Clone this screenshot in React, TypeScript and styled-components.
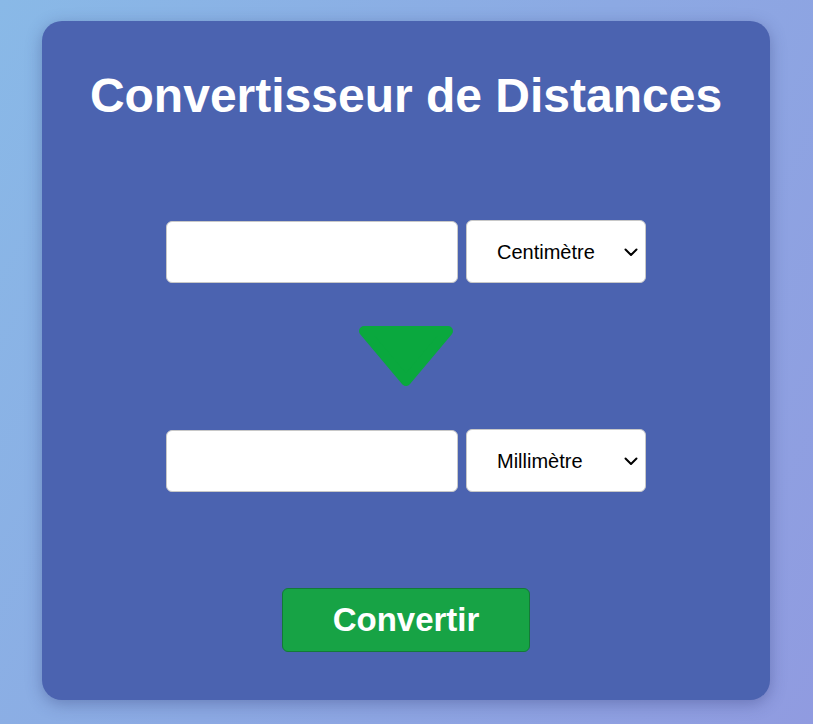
import React from "react";
import styled, { createGlobalStyle } from "styled-components";

const Global = createGlobalStyle`
  html, body { margin: 0; padding: 0; }
  body {
    min-height: 724px;
    background: linear-gradient(120deg, #89b9e7 0%, #8ca9e3 50%, #909be0 100%);
    font-family: "Liberation Sans", Arial, sans-serif;
  }
`;

const Page = styled.div`
  display: flex;
  justify-content: center;
  padding-top: 21px;
  padding-right: 1px;
  height: 724px;
  box-sizing: border-box;
`;

const Card = styled.div`
  width: 728px;
  height: 679px;
  box-sizing: border-box;
  background: #4b63b0;
  border-radius: 20px;
  box-shadow: 0 4px 16px rgba(40, 50, 110, 0.35);
  display: flex;
  flex-direction: column;
  align-items: center;
`;

const Title = styled.h1`
  margin: 47px 0 0;
  font-size: 48px;
  font-weight: bold;
  color: #ffffff;
  line-height: 55px;
`;

const Row = styled.div<{ $mt: number }>`
  display: flex;
  gap: 8px;
  margin-top: ${(p) => p.$mt}px;
`;

const Field = styled.input`
  width: 292px;
  height: 62px;
  box-sizing: border-box;
  border: 1px solid #c8c8c8;
  border-radius: 6px;
  background: #fff;
  font-family: "Liberation Sans", Arial, sans-serif;
  font-size: 20px;
  padding: 0 10px;
  margin-top: 1px;
`;

const SelectWrap = styled.div`
  position: relative;
  width: 180px;
  height: 63px;
`;

const Unit = styled.select`
  appearance: none;
  -webkit-appearance: none;
  width: 100%;
  height: 100%;
  box-sizing: border-box;
  border: 1px solid #c8c8c8;
  border-radius: 6px;
  background: #fff;
  color: #000;
  font-family: "Liberation Sans", Arial, sans-serif;
  font-size: 20px;
  padding: 0 8px 0 30px;
  outline: none;
`;

const Chevron = styled.svg`
  position: absolute;
  right: 7px;
  top: 50%;
  transform: translateY(-50%);
  pointer-events: none;
`;

const Arrow = styled.svg`
  display: block;
  margin-top: 42px;
`;

const ConvertButton = styled.button`
  margin-top: 96px;
  width: 248px;
  height: 64px;
  box-sizing: border-box;
  background: #17a345;
  border: 1px solid #137a37;
  border-radius: 6px;
  color: #fff;
  font-family: "Liberation Sans", Arial, sans-serif;
  font-size: 33px;
  font-weight: bold;
  cursor: pointer;
`;

const units = [
  { v: "mm", l: "Millimètre" },
  { v: "cm", l: "Centimètre" },
  { v: "m", l: "Mètre" },
  { v: "km", l: "Kilomètre" },
];

function UnitSelect({ value }: { value: string }) {
  return (
    <SelectWrap>
      <Unit defaultValue={value}>
        {units.map((u) => (
          <option key={u.v} value={u.v}>
            {u.l}
          </option>
        ))}
      </Unit>
      <Chevron width="16" height="16" viewBox="0 0 16 16">
        <path
          d="M2.5 5.5 L8 11 L13.5 5.5"
          fill="none"
          stroke="#000"
          strokeWidth="2"
          strokeLinecap="round"
          strokeLinejoin="round"
        />
      </Chevron>
    </SelectWrap>
  );
}

export default function App() {
  return (
    <>
      <Global />
      <Page>
        <Card>
          <Title>Convertisseur de Distances</Title>
          <Row $mt={97}>
            <Field type="text" />
            <UnitSelect value="cm" />
          </Row>
          <Arrow width="96" height="62" viewBox="0 0 96 62">
            <polygon
              points="6,6 90,6 48,56"
              fill="#0aa83e"
              stroke="#0aa83e"
              strokeWidth="10"
              strokeLinejoin="round"
            />
          </Arrow>
          <Row $mt={42}>
            <Field type="text" />
            <UnitSelect value="mm" />
          </Row>
          <ConvertButton>Convertir</ConvertButton>
        </Card>
      </Page>
    </>
  );
}
